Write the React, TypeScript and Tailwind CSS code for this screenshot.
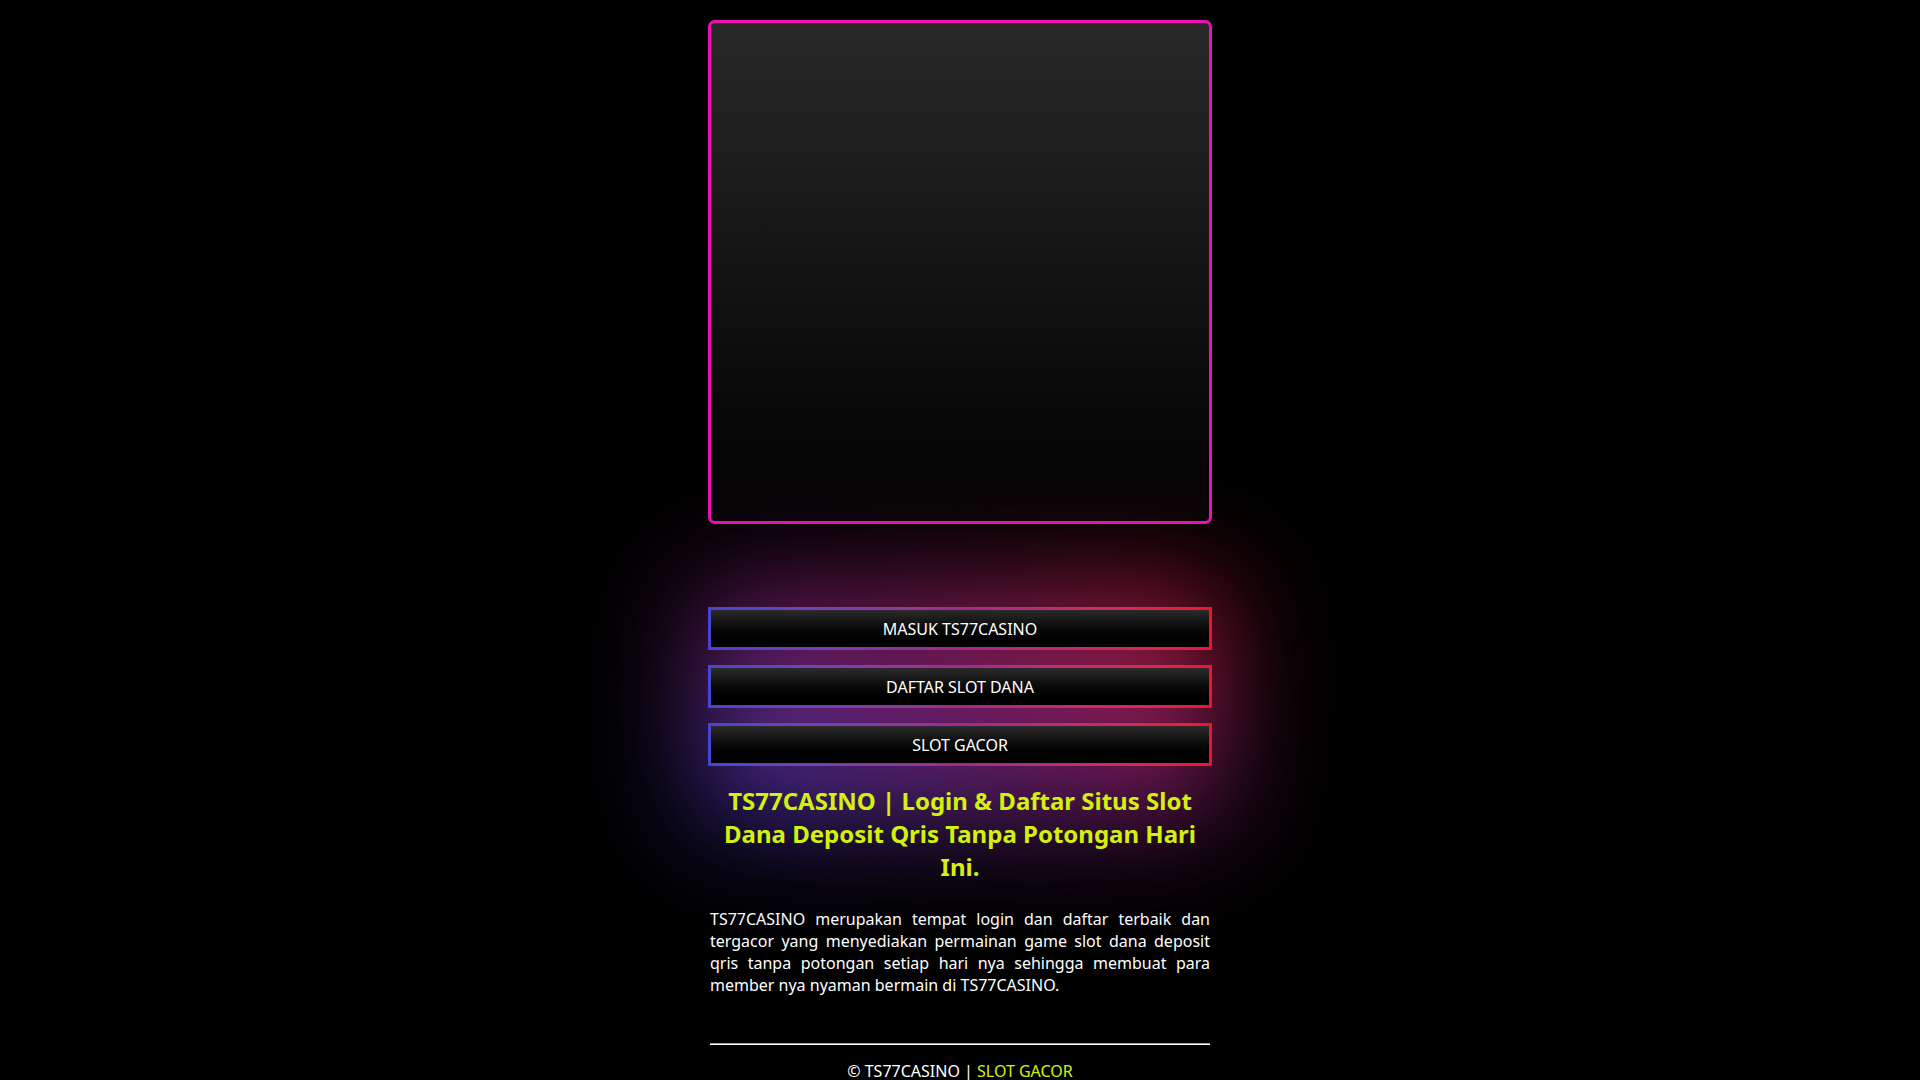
import React from 'react'

const links = ['MASUK TS77CASINO', 'DAFTAR SLOT DANA', 'SLOT GACOR']

const GlowButton = ({ label }: { label: string }) => (
  <a href="#" className="block p-[3px] bg-linear-to-r from-[#4744d2] via-[#a02a8a] to-[#f5102a]">
    <div className="h-[37px] flex items-center justify-center bg-linear-to-b from-[#2b2b2b] to-[#000000] text-white text-[16px]">
      {label}
    </div>
  </a>
)

const App = () => {
  return (
    <div className="min-h-screen bg-black font-['Noto_Sans',sans-serif] text-white overflow-hidden">
      <div className="mx-auto w-[504px] pt-[20px] pb-[10px]">
        {/* Banner */}
        <div className="h-[504px] rounded-[7px] border-[3px] border-[#ee10b4] bg-linear-to-b from-[#292929] to-[#030303]" />

        {/* Buttons + title */}
        <div className="relative mt-[83px]">
          <div className="absolute -left-[10px] -right-[10px] -top-[20px] bottom-[60px] bg-linear-to-tr from-[#3a34d8] via-[#8a1c7a] to-[#f01030] opacity-75 blur-[55px]" />
          <div className="relative flex flex-col gap-[15px]">
            {links.map((l) => (
              <GlowButton key={l} label={l} />
            ))}
          </div>
          <h1 className="relative mt-[18px] px-[2px] text-center text-[24px] leading-[33px] font-bold text-[#d4f00e]">
            TS77CASINO | Login &amp; Daftar Situs Slot Dana Deposit Qris Tanpa Potongan Hari Ini.
          </h1>
        </div>

        {/* Description */}
        <p className="mt-[25px] px-[2px] text-justify text-[16px] leading-[22px]">
          TS77CASINO merupakan tempat login dan daftar terbaik dan tergacor yang menyediakan permainan game slot dana deposit qris tanpa potongan setiap hari nya sehingga membuat para member nya nyaman bermain di TS77CASINO.
        </p>

        <div className="mx-[2px] mt-[47px] border-t border-b border-t-[#9a9a9a] border-b-[#ffffff]" />

        <div className="mt-[15px] text-center text-[16px] leading-[22px]">
          © TS77CASINO | <span className="text-[#d4f00e]">SLOT GACOR</span>
        </div>
      </div>
    </div>
  )
}

export default App
